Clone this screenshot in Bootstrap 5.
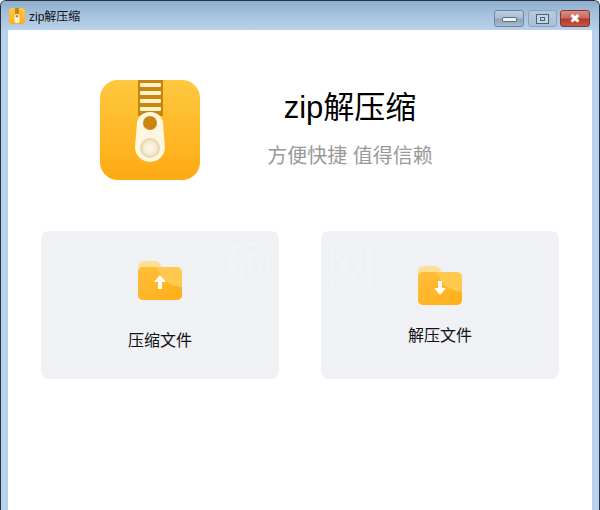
<!DOCTYPE html>
<html lang="zh-CN">
<head>
  <meta charset="UTF-8" />
  <title>zip解压缩</title>
  <link href="https://cdn.jsdelivr.net/npm/bootstrap@5.3.0/dist/css/bootstrap.min.css" rel="stylesheet">
  <style>
    html, body { height: 100%; }
    body {
      background: #e8eef5;
      font-family: "Liberation Sans", "Noto Sans CJK SC", sans-serif;
      color: #000;
      overflow: hidden;
    }
    .win-frame {
      height: 510px;
      padding: 0 7px;
      background: #b9d1ea;
      border: 1px solid #26333f;
      border-bottom: 0;
      border-radius: 6px 6px 0 0;
    }
    .win-bar {
      height: 29px;
      margin: 0 -7px;
      padding: 0 9px 0 8px;
      border-radius: 5px 5px 0 0;
      background: linear-gradient(#8eaccb 0%, #a3bfdc 40%, #b9d1ea 100%);
    }
    .win-title { font-size: 12px; line-height: 1; margin-left: 4px; color: #111; padding-top: 2px; }
    .win-icon { width: 16px; height: 16px; }
    .win-btns { align-self: flex-start; }
    .win-btn {
      height: 17px;
      margin-top: 9px;
      border: 1px solid #71859b;
      border-radius: 3px;
      background: linear-gradient(#bccfe2 0%, #a9bfd5 45%, #8ea3b8 55%, #a4bbd2 100%);
    }
    .win-btn-min { width: 30px; }
    .win-btn-max { width: 29px; margin-left: 4px; background: linear-gradient(#b4cae0 0%, #a9c0d7 100%); border-color: #8ba2ba; }
    .win-btn-close {
      width: 30px;
      margin-left: 3px;
      border-color: #7c3a34;
      background: linear-gradient(#d98f84 0%, #c96a5c 45%, #b03a2c 55%, #c65646 100%);
      color: #fff;
      font: bold 13px/1 "DejaVu Sans", sans-serif;
    }
    .glyph-min { width: 15px; height: 5px; background: #eef3f8; border: 1px solid #5c7085; border-radius: 1px; }
    .glyph-max { width: 13px; height: 10px; background: #c5d5e5; border: 1px solid #4d6177; padding: 2px 3px; }
    .glyph-max i { display: block; width: 5px; height: 4px; border: 1px solid #4d6177; }
    .win-body { background: #fff; height: 480px; position: relative; overflow: hidden; }
    .app-head { padding: 50px 0 0 92px; }
    .app-logo { width: 100px; height: 100px; }
    .app-info { width: 300px; padding-top: 6px; }
    .app-name { font-size: 31px; line-height: 44px; font-weight: 400; margin: 0; }
    .app-sub { font-size: 20px; line-height: 28px; color: #999; margin: 12px 0 0; }
    .tiles { padding: 51px 33px 0; gap: 42px; }
    .tile {
      width: 238px;
      height: 148px;
      background: #eff1f5;
      border-radius: 8px;
      font-size: 16px;
      line-height: 22px;
      color: #111;
    }
    .tile-left { padding-top: 29px; }
    .tile-right { padding-top: 34px; }
    .tile svg { width: 46px; height: 42px; }
    .tile-left .tile-label { margin-top: 28px; }
    .tile-right .tile-label { margin-top: 18px; }
    .stamp {
      position: absolute;
      left: 217px;
      top: 208px;
      width: 150px;
      color: #fff;
      opacity: .18;
      text-align: center;
      pointer-events: none;
    }
    .stamp-big { font-size: 50px; line-height: 56px; white-space: nowrap; }
    .stamp-url { font-size: 18px; line-height: 22px; white-space: nowrap; }
  </style>
</head>
<body>
  <div class="win-frame">
    <div class="win-bar d-flex align-items-center">
      <svg class="win-icon" viewBox="0 0 100 100">
        <defs><linearGradient id="smallBg" x1="0" y1="0" x2="0" y2="1"><stop offset="0" stop-color="#ffca45"/><stop offset="1" stop-color="#fdac14"/></linearGradient></defs>
        <rect width="100" height="100" rx="20" fill="url(#smallBg)"/>
        <rect x="38" y="0" width="24" height="42" fill="#c8860f"/>
        <rect x="34" y="38" width="32" height="56" rx="16" fill="#fff6df"/>
        <circle cx="50" cy="52" r="8" fill="#c8860f"/>
      </svg>
      <span class="win-title">zip解压缩</span>
      <div class="win-btns d-flex ms-auto">
        <div class="win-btn win-btn-min d-flex justify-content-center align-items-end pb-1"><div class="glyph-min"></div></div>
        <div class="win-btn win-btn-max d-flex justify-content-center align-items-center"><div class="glyph-max"><i></i></div></div>
        <div class="win-btn win-btn-close d-flex justify-content-center align-items-center">✖</div>
      </div>
    </div>
    <div class="win-body">
      <div class="app-head d-flex">
        <svg class="app-logo flex-shrink-0" viewBox="0 0 100 100">
          <defs>
            <linearGradient id="logoBg" x1="0" y1="0" x2="0" y2="1"><stop offset="0" stop-color="#ffc83f"/><stop offset="1" stop-color="#fdaa12"/></linearGradient>
            <radialGradient id="logoDot"><stop offset="0" stop-color="#fff8e8"/><stop offset=".6" stop-color="#f6ecd4"/><stop offset="1" stop-color="#e4cfa2"/></radialGradient>
          </defs>
          <rect width="100" height="100" rx="18" fill="url(#logoBg)"/>
          <rect x="38" y="0" width="25" height="36" fill="#c8860f"/>
          <rect x="40" y="3" width="21" height="4" rx="1" fill="#fff1c9"/>
          <rect x="40" y="11" width="21" height="4" rx="1" fill="#fff1c9"/>
          <rect x="40" y="19" width="21" height="4" rx="1" fill="#fff1c9"/>
          <rect x="40" y="27" width="21" height="4" rx="1" fill="#fff1c9"/>
          <path d="M50 32c8 0 12 5 13 11l2 24a15 15 0 0 1-30 0l2-24c1-6 5-11 13-11z" fill="#fff6e2"/>
          <circle cx="50" cy="43" r="7" fill="#c8860f"/>
          <circle cx="50" cy="68" r="10" fill="url(#logoDot)"/>
        </svg>
        <div class="app-info text-center">
          <h1 class="app-name">zip解压缩</h1>
          <p class="app-sub">方便快捷 值得信赖</p>
        </div>
      </div>
      <div class="tiles d-flex">
        <div class="tile tile-left text-center">
          <svg viewBox="0 0 46 42">
            <defs>
              <linearGradient id="folderFront" x1="0" y1="0" x2="1" y2="1"><stop offset="0" stop-color="#ffbf3c"/><stop offset="1" stop-color="#ffae18"/></linearGradient>
            </defs>
            <path d="M1 6a5 5 0 0 1 5-5h12c3 0 5 2 6 5v10H1z" fill="#fddf96"/>
            <rect x="1" y="7" width="44" height="33" rx="5" fill="#ffc94f"/>
            <path d="M1 12a5 5 0 0 1 5-5h12l5 5c2 7 9 14 22 15v8a5 5 0 0 1-5 5H6a5 5 0 0 1-5-5z" fill="url(#folderFront)"/>
            <path d="M23 15l-6 7h4v7h4v-7h4z" fill="#fffdf5"/>
          </svg>
          <div class="tile-label">压缩文件</div>
        </div>
        <div class="tile tile-right text-center">
          <svg viewBox="0 0 46 42">
            <path d="M1 6a5 5 0 0 1 5-5h12c3 0 5 2 6 5v10H1z" fill="#fddf96"/>
            <rect x="1" y="7" width="44" height="33" rx="5" fill="#ffc94f"/>
            <path d="M1 12a5 5 0 0 1 5-5h12l5 5c2 7 9 14 22 15v8a5 5 0 0 1-5 5H6a5 5 0 0 1-5-5z" fill="url(#folderFront)"/>
            <path d="M23 30l-6-7h4v-7h4v7h4z" fill="#fffdf5"/>
          </svg>
          <div class="tile-label">解压文件</div>
        </div>
      </div>
      <div class="stamp">
        <div class="stamp-big">硕夏网</div>
        <div class="stamp-url">www.sxiaw.com</div>
      </div>
    </div>
  </div>
</body>
</html>
